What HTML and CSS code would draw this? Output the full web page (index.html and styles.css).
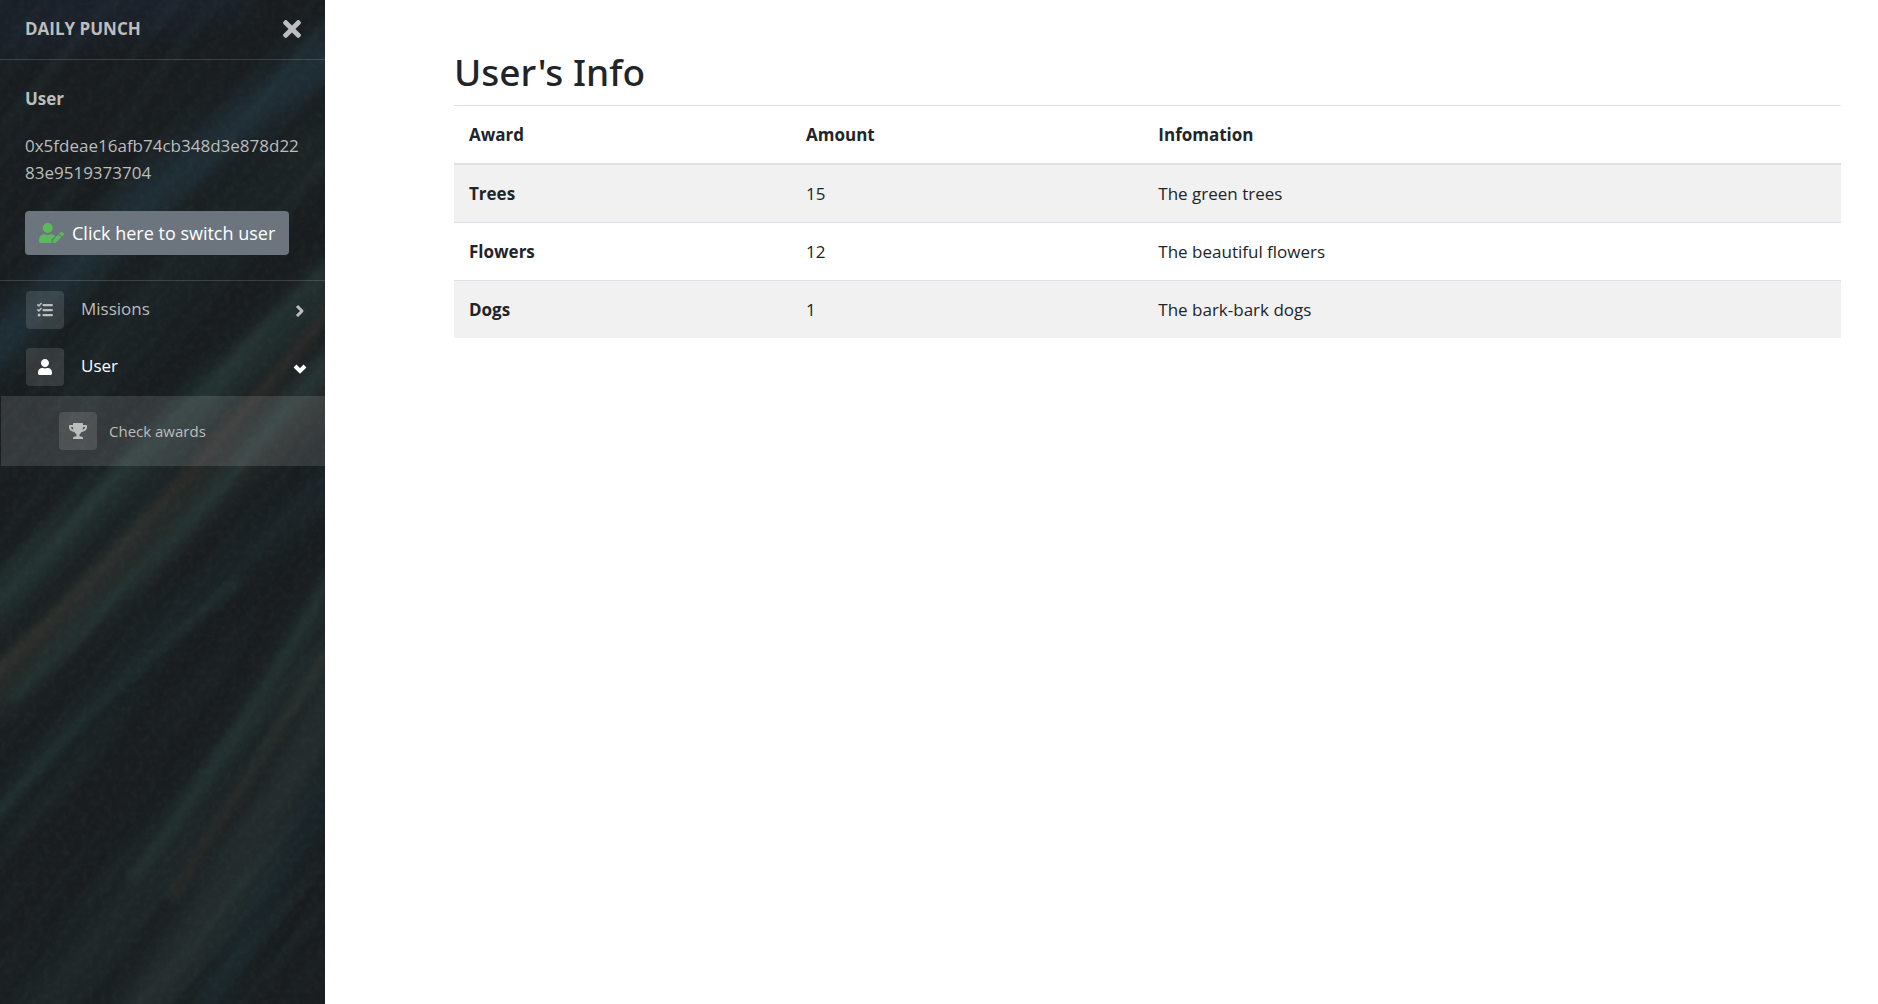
FILE: index.html
```html
<!DOCTYPE html>
<html lang="en">
<head>
<meta charset="utf-8">
<title>Daily Punch</title>
<meta name="viewport" content="width=device-width, initial-scale=1">
<link rel="stylesheet" href="styles.css">
</head>
<body>
<div class="layout">
  <aside class="sidebar">
    <svg class="backdrop" viewBox="0 0 325 1004" preserveAspectRatio="xMidYMid slice" aria-hidden="true">
      <defs>
        <filter id="soft" x="-30%" y="-30%" width="160%" height="160%" color-interpolation-filters="sRGB"><feGaussianBlur stdDeviation="12"/></filter>
        <filter id="fine" x="-30%" y="-30%" width="160%" height="160%" color-interpolation-filters="sRGB"><feGaussianBlur stdDeviation="5"/></filter>
        <filter id="grain" x="0" y="0" width="100%" height="100%" color-interpolation-filters="sRGB">
          <feTurbulence type="fractalNoise" baseFrequency="0.16" numOctaves="3" seed="4"/>
          <feColorMatrix values="0 0 0 0 0.5  0 0 0 0 0.6  0 0 0 0 0.6  0.6 0 0 0 -0.24"/>
        </filter>
        <filter id="streaks" x="0" y="0" width="100%" height="100%" color-interpolation-filters="sRGB">
          <feTurbulence type="fractalNoise" baseFrequency="0.004 0.06" numOctaves="2" seed="9"/>
          <feColorMatrix values="0 0 0 0 0.3  0 0 0 0 0.46  0 0 0 0 0.47  0.9 0 0 0 -0.4"/>
        </filter>
      </defs>
      <rect width="325" height="1004" fill="#191d1f"/>
      <g fill="none" filter="url(#soft)">
        <path d="M-20 365Q120 210 345 40" stroke="#203038" stroke-width="36"/>
        <path d="M-20 30Q120 10 250-20" stroke="#1b212a" stroke-width="60"/>
        <path d="M60 400Q200 240 345 130" stroke="#1c2325" stroke-width="50"/>
        <path d="M-20 620Q130 470 345 270" stroke="#23302f" stroke-width="34"/>
        <path d="M-20 710Q120 570 345 360" stroke="#252b29" stroke-width="44"/>
        <path d="M-20 830Q130 650 345 470" stroke="#1c262a" stroke-width="22"/>
        <path d="M30 1024Q200 820 345 570" stroke="#20292a" stroke-width="32"/>
        <path d="M110 1044Q230 900 345 670" stroke="#252d2d" stroke-width="40"/>
        <path d="M200 1024Q260 890 345 770" stroke="#1b282d" stroke-width="20"/>
      </g>
      <g fill="none" filter="url(#fine)" opacity=".6">
        <path d="M-10 610Q130 460 335 260" stroke="#293a39" stroke-width="10"/>
        <path d="M-10 680Q130 550 335 305" stroke="#383530" stroke-width="10"/>
        <path d="M10 700Q140 580 335 350" stroke="#253736" stroke-width="12"/>
        <path d="M-10 825Q80 710 240 580" stroke="#253636" stroke-width="9"/>
        <path d="M130 880Q240 740 335 570" stroke="#293b3b" stroke-width="10"/>
        <path d="M170 900Q260 760 335 640" stroke="#32342f" stroke-width="10"/>
      </g>
      <rect x="-700" y="-500" width="1800" height="1800" transform="rotate(-50 162 502)" filter="url(#streaks)" opacity=".25"/>
      <rect width="325" height="1004" filter="url(#grain)" opacity=".18"/>
    </svg>
    <header class="brand">
      <a class="brand-name" href="#">DAILY PUNCH</a>
      <button class="close" type="button" aria-label="Close menu">
        <svg class="close-icon" viewBox="0 0 352 512" fill="currentColor" aria-hidden="true"><path d="M242.72 256l100.07-100.07c12.28-12.28 12.28-32.19 0-44.48l-22.24-22.24c-12.28-12.28-32.19-12.28-44.48 0L176 189.28 75.93 89.21c-12.28-12.28-32.19-12.28-44.48 0L9.21 111.45c-12.28 12.28-12.28 32.19 0 44.48L109.28 256 9.21 356.07c-12.28 12.28-12.28 32.19 0 44.48l22.24 22.24c12.28 12.28 32.2 12.28 44.48 0L176 322.72l100.07 100.07c12.28 12.28 32.2 12.28 44.48 0l22.24-22.24c12.28-12.28 12.28-32.19 0-44.48L242.72 256z"/></svg>
      </button>
    </header>
    <section class="account">
      <strong>User</strong>
      <p class="address">0x5fdeae16afb74cb348d3e878d2283e9519373704</p>
      <button class="switch" type="button">
        <svg class="switch-icon" viewBox="0 0 640 512" fill="currentColor" aria-hidden="true"><circle cx="224" cy="128" r="128"/><path d="M313.600 288h-16.700c-22.200 10.200-46.900 16-72.900 16s-50.600-5.800-72.900-16h-16.700C60.200 288 0 348.200 0 422.400V464c0 26.500 21.500 48 48 48h274.900c-2.400-6.800-3.400-14-2.600-21.300l6.800-60.900 1.200-11.100 7.900-7.900 77.300-77.300c-24.500-27.700-60-45.500-99.900-45.500zm45.300 145.300l-6.800 61c-1.100 10.200 7.500 18.800 17.600 17.600l60.900-6.800 137.900-137.900-71.700-71.700-137.900 137.800zM633 268.900L595.100 231c-9.300-9.300-24.500-9.300-33.800 0l-41.800 41.800 71.800 71.700 41.700-41.700c9.300-9.300 9.300-24.500 0-33.900z"/></svg>
        Click here to switch user
      </button>
    </section>
    <nav class="menu">
      <a class="item" href="#">
        <span class="tile"><svg class="icon" viewBox="0 0 512 512" fill="none" stroke="currentColor" stroke-linecap="round" aria-hidden="true"><path stroke-width="72" d="M208 96h268M208 256h268M208 416h268"/><path stroke-width="52" d="M28 92l34 34 68-76M28 252l34 34 68-76"/><circle cx="68" cy="416" r="48" fill="currentColor" stroke="none"/></svg></span>
        <span class="label">Missions</span>
        <svg class="chevron" viewBox="0 0 16 16" fill="none" stroke="currentColor" stroke-width="3" stroke-linejoin="round" aria-hidden="true"><path d="M6 4l5 5-5 5"/></svg>
      </a>
      <a class="item open" href="#">
        <span class="tile"><svg class="icon" viewBox="0 0 448 512" fill="currentColor" aria-hidden="true"><path d="M224 256c70.700 0 128-57.300 128-128S294.700 0 224 0 96 57.300 96 128s57.300 128 128 128zm89.600 32h-16.700c-22.200 10.200-46.900 16-72.900 16s-50.600-5.800-72.900-16h-16.700C60.200 288 0 348.200 0 422.400V464c0 26.500 21.500 48 48 48h352c26.500 0 48-21.500 48-48v-41.600c0-74.200-60.200-134.400-134.400-134.400z"/></svg></span>
        <span class="label">User</span>
        <svg class="chevron" viewBox="0 0 16 16" fill="none" stroke="currentColor" stroke-width="4" aria-hidden="true"><path d="M4 7l5 5 5-5"/></svg>
      </a>
      <div class="submenu">
        <a class="subitem" href="#">
          <span class="tile"><svg class="icon trophy" viewBox="0 0 576 512" fill="currentColor" aria-hidden="true"><path d="M552 64H448V24c0-13.300-10.700-24-24-24H152c-13.300 0-24 10.700-24 24v40H24C10.700 64 0 74.700 0 88v56c0 35.700 22.500 72.400 61.900 100.700 31.500 22.700 69.800 37.100 110 41.700C203.300 338.500 240 360 240 360v72h-48c-35.300 0-64 20.700-64 56v12c0 6.600 5.400 12 12 12h296c6.600 0 12-5.400 12-12v-12c0-35.300-28.700-56-64-56h-48v-72s36.700-21.500 68.100-73.600c40.300-4.600 78.600-19 110-41.700 39.300-28.300 61.900-65 61.900-100.700V88c0-13.300-10.700-24-24-24zM99.300 192.800C74.900 175.200 64 155.600 64 144v-16h64.200c1 32.600 5.800 61.200 12.800 86.200-15.100-5.200-29.200-12.400-41.700-21.400zM512 144c0 16.100-17.700 36.100-35.300 48.800-12.500 9-26.700 16.200-41.800 21.400 7-25 11.800-53.600 12.800-86.200H512v16z"/></svg></span>
          <span>Check awards</span>
        </a>
      </div>
    </nav>
  </aside>
  <main class="content">
    <h1>User's Info</h1>
    <table class="awards">
      <thead><tr><th scope="col">Award</th><th scope="col">Amount</th><th scope="col">Infomation</th></tr></thead>
      <tbody>
        <tr><th scope="row">Trees</th><td>15</td><td>The green trees</td></tr>
        <tr><th scope="row">Flowers</th><td>12</td><td>The beautiful flowers</td></tr>
        <tr><th scope="row">Dogs</th><td>1</td><td>The bark-bark dogs</td></tr>
      </tbody>
    </table>
  </main>
</div>
</body>
</html>
```
FILE: styles.css
```css
* { box-sizing: border-box; }

body {
  margin: 0;
  background: #fff;
  color: #212529;
  font: 400 17px/27px "Open Sans", "Noto Sans", sans-serif;
}

a { color: inherit; text-decoration: none; }
button { font: inherit; cursor: pointer; }
svg { display: block; flex: none; }

.layout {
  display: grid;
  grid-template-columns: 325px minmax(0, 1fr);
  min-height: 100vh;
}

.sidebar {
  position: relative;
  isolation: isolate;
  overflow: hidden;
  color: #bdbdbd;
}

.backdrop {
  position: absolute;
  inset: 0;
  z-index: -1;
  width: 100%;
  height: 100%;
}

.brand {
  display: flex;
  align-items: center;
  justify-content: space-between;
  padding: 15px 24px 17px 25px;
  border-bottom: 1px solid #ffffff26;
}

.brand-name { font-weight: 700; }

.close {
  padding: 0;
  border: 0;
  background: none;
  color: inherit;
}

.close-icon { width: 18px; height: 26px; }

.account {
  padding: 25px;
  border-bottom: 1px solid #ffffff26;
}

.account strong { display: block; font-weight: 700; }

.address {
  margin: 20px 0 25px;
  overflow-wrap: anywhere;
}

.switch {
  display: flex;
  align-items: center;
  gap: 8px;
  padding: 8px 14px;
  border: 0;
  border-radius: 4px;
  background: #6c757d;
  color: #fff;
  font-size: 18px;
  line-height: 28px;
  white-space: nowrap;
}

.switch-icon { width: 25px; height: 20px; color: #5cb85c; }

.item {
  display: flex;
  align-items: center;
  gap: 17px;
  padding: 10px 18px 9px 26px;
}

.item.open { color: #fff; }

.tile {
  display: grid;
  place-items: center;
  width: 38px;
  height: 38px;
  border-radius: 4px;
  background: #ffffff1f;
}

.icon { width: 16px; height: 16px; }
.trophy { width: 18px; }
.label { flex: 1; padding-bottom: 3px; }
.chevron { width: 16px; height: 16px; }

.submenu {
  margin: 1px 0 0 1px;
  background: #ffffff1f;
}

.subitem {
  display: flex;
  align-items: center;
  gap: 12px;
  padding: 16px 24px 16px 58px;
  font-size: 15px;
}

.content { padding: 48px 37px 48px 129px; }

h1 {
  margin: 0 0 9px;
  font-family: "Noto Sans", "Open Sans", sans-serif;
  font-size: 37px;
  font-weight: 500;
  line-height: 48px;
}

.awards {
  width: 100%;
  border-collapse: separate;
  border-spacing: 0;
  table-layout: fixed;
}

.awards th, .awards td {
  padding: 15px;
  border-top: 1px solid #dee2e6;
  text-align: left;
}

.awards th { font-weight: 700; }
.awards thead th { border-bottom: 2px solid #dee2e6; }
.awards thead th:nth-child(1) { width: 24.3%; }
.awards thead th:nth-child(2) { width: 25.4%; }
.awards tbody tr:first-child > * { border-top: 0; }
.awards tbody tr:nth-child(odd) { background: #f1f1f1; }
```
